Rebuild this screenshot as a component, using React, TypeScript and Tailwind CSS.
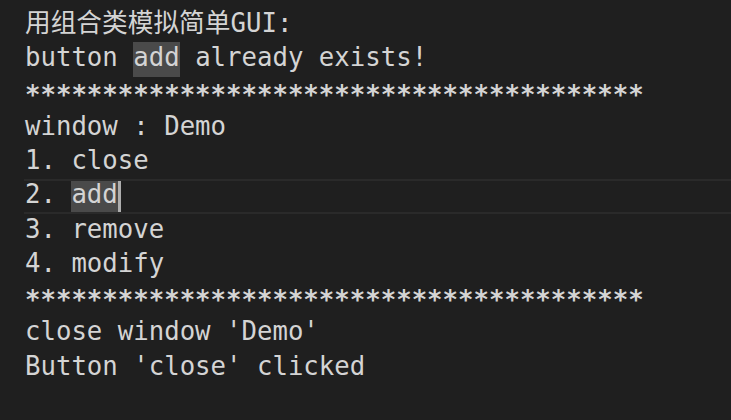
import React from 'react';

// each row is 34.25px tall; text sits a little above centre, like the editor's
const Line: React.FC<{ children: React.ReactNode; className?: string }> = ({ children, className }) => (
  <div className={'h-[34.25px] whitespace-pre flex items-start leading-[30px] ' + (className ?? '')}>
    {children}
  </div>
);

const stars = '*'.repeat(40);

const App: React.FC = () => {
  return (
    <div className="w-[731px] h-[420px] bg-[#1f1f1f] overflow-hidden">
      <div
        className="pt-[8px] pl-[25px] text-[25.7px] text-[#d4d4d4]"
        style={{ fontFamily: '"DejaVu Sans Mono", "Noto Sans CJK SC", monospace' }}
      >
        <Line>
          <span>用组合类模拟简单GUI:</span>
        </Line>
        <Line>
          <span>button </span>
          <span className="bg-[#4a4a4a] pb-[4.25px]">add</span>
          <span> already exists!</span>
        </Line>
        <Line className="pt-[3px] font-bold">{stars}</Line>
        <Line>window : Demo</Line>
        <Line>1. close</Line>
        {/* current line */}
        <div className="h-[34.25px] -ml-px border-y-2 border-[#2a2a2a] whitespace-pre flex items-start leading-[26px]">
          <span className="pl-px">2. </span>
          <span className="bg-[#4a4a4a] pb-[4.25px]">add</span>
          <span className="w-[3px] h-[30.25px] bg-[#aeaeae]" />
        </div>
        <Line>3. remove</Line>
        <Line>4. modify</Line>
        <Line className="pt-[3px] font-bold">{stars}</Line>
        <Line>close window 'Demo'</Line>
        <Line>Button 'close' clicked</Line>
      </div>
    </div>
  );
};

export default App;
